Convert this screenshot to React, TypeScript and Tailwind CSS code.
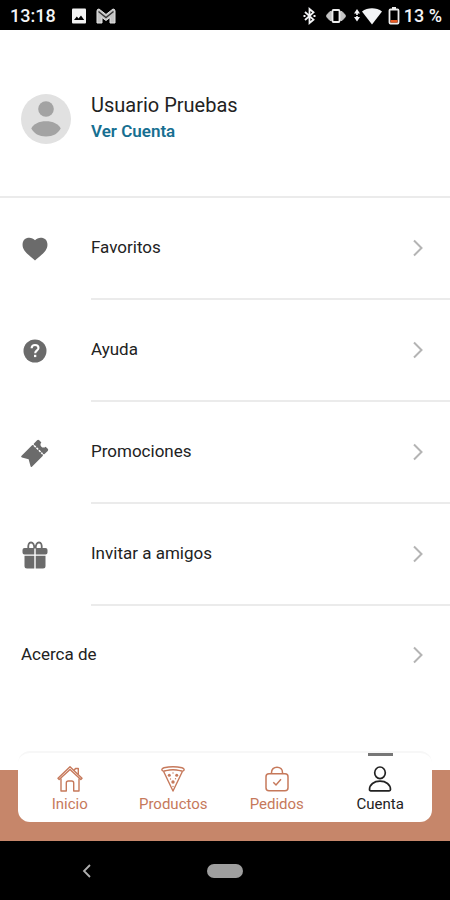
import type { ReactNode } from "react";

interface MenuItem {
  label: string;
  icon: ReactNode;
}

interface Tab {
  label: string;
  icon: ReactNode;
  active?: boolean;
}

function HeartIcon() {
  return (
    <svg width="26" height="24" viewBox="0 0 26 24" fill="currentColor" aria-hidden="true">
      <path d="M13 23.500C11 21.300 5.500 17.600 2.400 13.400C-.3 9.500 0 4.500 3 2.100C6.200-.3 10.700.6 13 3.200C15.300.6 19.800-.3 23 2.100C26 4.500 26.300 9.500 23.600 13.400C20.500 17.600 15 21.300 13 23.500Z" />
    </svg>
  );
}

function HelpIcon() {
  return (
    <svg width="24" height="24" viewBox="0 0 24 24" aria-hidden="true">
      <circle cx="12" cy="12" r="11.500" fill="currentColor" />
      <path
        d="M8.600 9.300C8.600 7.200 10 6 12 6C14 6 15.500 7.200 15.500 9C15.500 11.300 12.200 11.500 12.200 14.300"
        fill="none"
        stroke="white"
        strokeWidth="2.100"
      />
      <rect x="11" y="15.800" width="2.300" height="2.300" fill="white" />
    </svg>
  );
}

function TicketIcon() {
  return (
    <svg width="30" height="30" viewBox="0 0 30 30" aria-hidden="true">
      <g transform="rotate(-45 15 15)">
        <path
          d="M3.500 7.500H18.700L19.700 9L20.700 7.500H25.500Q27 7.500 27 9V12C25 12 24 13.500 24 15C24 16.500 25 18 27 18V21Q27 22.500 25.500 22.500H20.700L19.700 21L18.700 22.500H3.500Q1.700 22.500 2.600 21L6 15L2.600 9Q1.700 7.500 3.500 7.500Z"
          fill="currentColor"
        />
        <path d="M19.700 9V21" stroke="white" strokeWidth="1.500" strokeDasharray="2.400 1" />
      </g>
    </svg>
  );
}

function GiftIcon() {
  return (
    <svg width="26" height="28" viewBox="0 0 26 28" fill="currentColor" aria-hidden="true">
      <path
        d="M12.300 7.500C12.300 3.500 11 1.500 9 1.500C6.800 1.500 6 3.500 6.300 7.500M13.700 7.500C13.700 3.500 15 1.500 17 1.500C19.200 1.500 20 3.500 19.700 7.500"
        fill="none"
        stroke="currentColor"
        strokeWidth="1.800"
      />
      <path d="M2.500 7H12.300V13.500H2.500Q.5 13.500.5 11.500V9Q.5 7 2.500 7ZM13.700 7H23.500Q25.500 7 25.500 9V11.500Q25.500 13.500 23.500 13.500H13.700Z" />
      <path d="M2.500 14.700H12.300V27.500H5Q2.500 27.500 2.500 25ZM13.700 14.700H23.500V25Q23.500 27.500 21 27.500H13.700Z" />
    </svg>
  );
}

function ChevronIcon() {
  return (
    <svg width="12" height="18" viewBox="0 0 12 18" fill="none" className="text-[#b4b4b4]" aria-hidden="true">
      <path d="M2 1.500L9.500 9L2 16.500" stroke="currentColor" strokeWidth="2" />
    </svg>
  );
}

function HomeIcon() {
  return (
    <svg width="26" height="26" viewBox="0 0 26 26" fill="none" stroke="currentColor" strokeWidth="1.400" strokeLinejoin="round" aria-hidden="true">
      <path d="M1 12.300L13 .8L25 12.300L23.800 13.600L13 3.500L2.200 13.600Z" />
      <path d="M17 4.500L18.500 2.500H21.300V8.500" />
      <path d="M4 12.500V25H9.300V17Q9.300 15 11.300 15H14.700Q16.700 15 16.700 17V25H22V12.500" />
    </svg>
  );
}

function PizzaIcon() {
  return (
    <svg width="26" height="26" viewBox="0 0 26 26" fill="none" stroke="currentColor" strokeWidth="1.400" strokeLinejoin="round" aria-hidden="true">
      <path d="M2.500 4.800C1.300 3.800 2 2.200 4 1.700C9.500.6 16.500.6 22 1.700C24 2.200 24.700 3.800 23.500 4.800C22.700 5.500 21.500 5 20 4.600C15.500 3.600 10.500 3.600 6 4.600C4.500 5 3.300 5.500 2.500 4.800Z" />
      <path d="M3.500 5.200L13 25L22.500 5.200" />
      <g fill="currentColor" stroke="none">
        <circle cx="9.300" cy="9.300" r="1.500" />
        <circle cx="16.700" cy="9.300" r="1.500" />
        <circle cx="13" cy="16" r="1.700" />
        <circle cx="13" cy="7" r=".7" />
        <circle cx="10.500" cy="13" r=".7" />
        <circle cx="15.500" cy="12.800" r=".7" />
        <circle cx="13" cy="20.500" r=".7" />
      </g>
    </svg>
  );
}

function BagIcon() {
  return (
    <svg width="26" height="26" viewBox="0 0 26 26" fill="none" stroke="currentColor" strokeWidth="1.500" aria-hidden="true">
      <rect x="2" y="7.800" width="22" height="17" rx="3" />
      <path d="M7.500 7.800V6.500C7.500 3.300 9.800 1.200 13 1.200C16.200 1.200 18.500 3.300 18.500 6.500V7.800" />
      <path d="M9.300 16.300L12 19L17 13.300" />
    </svg>
  );
}

function AccountIcon() {
  return (
    <svg width="26" height="26" viewBox="0 0 26 26" fill="none" stroke="currentColor" strokeWidth="1.700" strokeLinejoin="round" aria-hidden="true">
      <ellipse cx="13" cy="6.800" rx="5.300" ry="5.800" />
      <path d="M2.500 23.500C2.500 18.500 7 15.200 13 15.200C19 15.200 23.500 18.500 23.500 23.500Q23.500 24.800 22.200 24.800H3.800Q2.500 24.800 2.500 23.500Z" />
    </svg>
  );
}

function Avatar() {
  return (
    <svg width="50" height="50" viewBox="0 0 50 50" aria-hidden="true">
      <circle cx="25" cy="25" r="25" fill="#e1e1e1" />
      <circle cx="25" cy="15" r="7.800" fill="#a3a3a3" />
      <path d="M10.300 34.500C12.500 30 18 27.300 25 27.300C32 27.300 37.500 30 39.700 34.500C37 39.500 32 42.500 25 42.500C18 42.500 13 39.500 10.300 34.500Z" fill="#a3a3a3" />
    </svg>
  );
}

const menuItems: MenuItem[] = [
  { label: "Favoritos", icon: <HeartIcon /> },
  { label: "Ayuda", icon: <HelpIcon /> },
  { label: "Promociones", icon: <TicketIcon /> },
  { label: "Invitar a amigos", icon: <GiftIcon /> },
];

const tabs: Tab[] = [
  { label: "Inicio", icon: <HomeIcon /> },
  { label: "Productos", icon: <PizzaIcon /> },
  { label: "Pedidos", icon: <BagIcon /> },
  { label: "Cuenta", icon: <AccountIcon />, active: true },
];

function StatusBar() {
  return (
    <div className="flex h-[30px] items-center justify-between bg-black pt-0.5 pr-2 pl-2.5 text-lg font-medium text-gray-100">
      <div className="flex items-center">
        <span>13:18</span>
        <svg className="ml-4" width="14" height="16" viewBox="0 0 14 16" aria-hidden="true">
          <rect y=".5" width="14" height="15" rx="1" fill="#f3f3f3" />
          <path d="M2 12L4.800 8.500L6.500 10.500L9 7.500L12.200 12Z" fill="black" />
        </svg>
        <svg className="ml-2.5" width="20" height="16" viewBox="0 0 20 16" aria-hidden="true">
          <path d="M1 3Q1 1 3 1L10 6.500L17 1Q19 1 19 3V15H14V9.500L10 12.500L6 9.500V15H1Z" fill="#c4c4c4" stroke="#e2e2e2" />
          <path d="M2.500 3.500L10 9.500L17.500 3.500" fill="none" stroke="#333333" strokeWidth="1.400" />
        </svg>
      </div>

      <div className="flex items-center">
        <svg width="13" height="18" viewBox="0 0 13 18" fill="none" stroke="currentColor" strokeWidth="1.800" aria-hidden="true">
          <path d="M2 5L10.500 12.700L6.500 16V2L10.500 5.300L2 13" />
          <path d="M.5 9H2.500M10.500 9H12.500" strokeWidth="2" />
        </svg>
        <svg className="ml-2.5" width="20" height="18" viewBox="0 0 20 18" aria-hidden="true">
          <path d="M5.500 4.500V13.500H4L.8 10V8L4 4.500ZM14.500 4.500V13.500H16L19.200 10V8L16 4.500Z" fill="#c4c4c4" stroke="#c4c4c4" />
          <rect x="6.500" y="3" width="7" height="12" rx="1" fill="black" stroke="#ededed" strokeWidth="1.800" />
        </svg>
        <svg className="ml-2" width="6" height="14" viewBox="0 0 6 14" fill="currentColor" aria-hidden="true">
          <path d="M3 0L6 4.500H0ZM0 8H6L3 12.500ZM2.200 4H3.800V6H2.200ZM2.200 7H3.800V9H2.200Z" />
        </svg>
        <svg className="ml-0.5" width="20" height="18" viewBox="0 0 20 18" fill="currentColor" aria-hidden="true">
          <path d="M0 4.500C5.500.2 14.500.2 20 4.500L10 17.500Z" />
        </svg>
        <svg className="ml-1.5" width="12" height="18" viewBox="0 0 12 18" aria-hidden="true">
          <rect x="4" y="0" width="4" height="3" fill="#ededed" />
          <rect x="1.500" y="2.500" width="9" height="14" rx="1" fill="black" stroke="#ededed" strokeWidth="1.800" />
          <rect x="2.500" y="13" width="7" height="2.600" fill="#e85a24" />
        </svg>
        <span className="ml-1">13 %</span>
      </div>
    </div>
  );
}

export default function App() {
  return (
    <div className="flex min-h-screen flex-col bg-white font-[Roboto,sans-serif] text-[#222222]">
      <StatusBar />

      <header className="flex h-[168px] items-center gap-5 border-b-2 border-[#ebebeb] pt-3 pl-[21px]">
        <Avatar />
        <div className="pb-1">
          <h1 className="text-xl leading-7">Usuario Pruebas</h1>
          <a href="#cuenta" className="block text-[17px] leading-6 font-semibold text-[#176f91]">
            Ver Cuenta
          </a>
        </div>
      </header>

      <main className="flex-1">
        <ul>
          {menuItems.map((item) => (
            <li key={item.label}>
              <button type="button" className="flex w-full items-stretch text-left text-[17px]">
                <span className="flex w-[91px] shrink-0 items-center pl-5 text-[#6b6b6b]">
                  <span className="flex w-[30px] justify-center">{item.icon}</span>
                </span>
                <span className="flex h-[102px] flex-1 items-center justify-between border-b-2 border-[#ebebeb] pr-[26px]">
                  {item.label}
                  <ChevronIcon />
                </span>
              </button>
            </li>
          ))}
          <li>
            <button type="button" className="flex h-[98px] w-full items-center justify-between pr-[26px] pl-[21px] text-left text-[17px]">
              Acerca de
              <ChevronIcon />
            </button>
          </li>
        </ul>
      </main>

      {/* Bottom tabs, the card rises above the coloured strip */}
      <footer className="bg-[#c6866a] px-[18px] pb-[19px]">
        <nav className="-mt-[19px] grid grid-cols-4 rounded-xl border-t-2 border-[#f7f7f7] bg-white">
          {tabs.map((tab) => (
            <button
              key={tab.label}
              type="button"
              aria-current={tab.active ? "page" : undefined}
              className={`flex flex-col items-center text-[15px] ${
                tab.active ? "text-[#222222]" : "text-[#c6795b]"
              }`}
            >
              <span className={`h-[3px] w-[25px] ${tab.active ? "bg-[#777777]" : ""}`} />
              <span className="mt-2.5">{tab.icon}</span>
              <span className="pt-0.5 pb-2 leading-5">{tab.label}</span>
            </button>
          ))}
        </nav>
      </footer>

      {/* System navigation */}
      <div className="grid h-[59px] grid-cols-[1fr_auto_1fr] items-center bg-black">
        <button type="button" aria-label="Atrás" className="ml-[82px] w-2.5 text-[#b0b0b0]">
          <svg width="10" height="14" viewBox="0 0 10 14" fill="none" aria-hidden="true">
            <path d="M8 1L2 7L8 13" stroke="currentColor" strokeWidth="1.800" />
          </svg>
        </button>
        <button type="button" aria-label="Inicio del sistema" className="h-3.5 w-9 rounded-full bg-[#9e9e9e]" />
      </div>
    </div>
  );
}
